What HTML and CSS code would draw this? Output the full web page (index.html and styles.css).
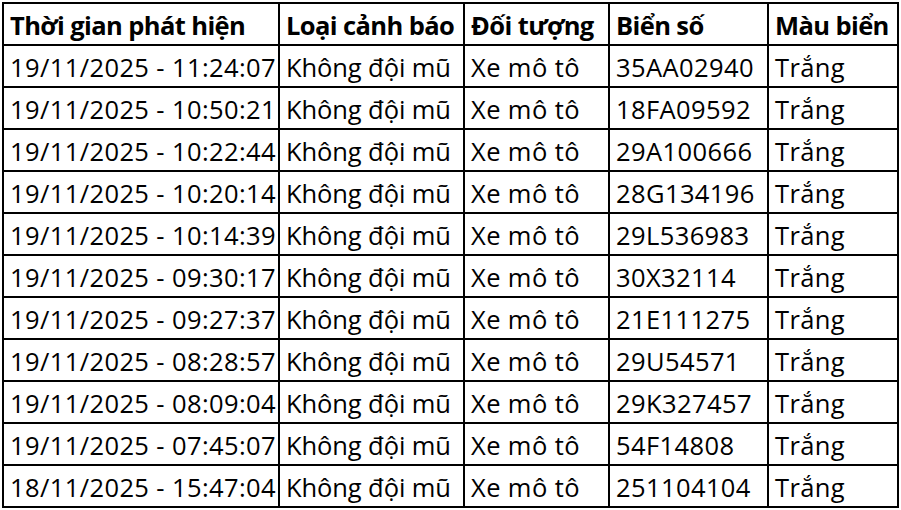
FILE: index.html
```html
<!DOCTYPE html>
<html lang="vi">
<head>
<meta charset="utf-8">
<link rel="stylesheet" href="styles.css">
</head>
<body>
<div class="sheet">
  <div class="cell head">Thời gian phát hiện</div>
  <div class="cell head">Loại cảnh báo</div>
  <div class="cell head">Đối tượng</div>
  <div class="cell head">Biển số</div>
  <div class="cell head">Màu biển</div>

  <div class="cell">19/11/2025 - 11:24:07</div><div class="cell">Không đội mũ</div><div class="cell">Xe mô tô</div><div class="cell">35AA02940</div><div class="cell">Trắng</div>
  <div class="cell">19/11/2025 - 10:50:21</div><div class="cell">Không đội mũ</div><div class="cell">Xe mô tô</div><div class="cell">18FA09592</div><div class="cell">Trắng</div>
  <div class="cell">19/11/2025 - 10:22:44</div><div class="cell">Không đội mũ</div><div class="cell">Xe mô tô</div><div class="cell">29A100666</div><div class="cell">Trắng</div>
  <div class="cell">19/11/2025 - 10:20:14</div><div class="cell">Không đội mũ</div><div class="cell">Xe mô tô</div><div class="cell">28G134196</div><div class="cell">Trắng</div>
  <div class="cell">19/11/2025 - 10:14:39</div><div class="cell">Không đội mũ</div><div class="cell">Xe mô tô</div><div class="cell">29L536983</div><div class="cell">Trắng</div>
  <div class="cell">19/11/2025 - 09:30:17</div><div class="cell">Không đội mũ</div><div class="cell">Xe mô tô</div><div class="cell">30X32114</div><div class="cell">Trắng</div>
  <div class="cell">19/11/2025 - 09:27:37</div><div class="cell">Không đội mũ</div><div class="cell">Xe mô tô</div><div class="cell">21E111275</div><div class="cell">Trắng</div>
  <div class="cell">19/11/2025 - 08:28:57</div><div class="cell">Không đội mũ</div><div class="cell">Xe mô tô</div><div class="cell">29U54571</div><div class="cell">Trắng</div>
  <div class="cell">19/11/2025 - 08:09:04</div><div class="cell">Không đội mũ</div><div class="cell">Xe mô tô</div><div class="cell">29K327457</div><div class="cell">Trắng</div>
  <div class="cell">19/11/2025 - 07:45:07</div><div class="cell">Không đội mũ</div><div class="cell">Xe mô tô</div><div class="cell">54F14808</div><div class="cell">Trắng</div>
  <div class="cell">18/11/2025 - 15:47:04</div><div class="cell">Không đội mũ</div><div class="cell">Xe mô tô</div><div class="cell">251104104</div><div class="cell">Trắng</div>
</div>
</body>
</html>
```
FILE: styles.css
```css
html, body {
  margin: 0;
  padding: 0;
  background: #ffffff;
}
body {
  padding: 2px 0 0 2px;
  font-family: "Open Sans", "Noto Sans", sans-serif;
  color: #000000;
}
.sheet {
  display: grid;
  grid-template-columns: 274px 183px 143px 157px 128px;
  grid-auto-rows: 40px;
  gap: 2px;
  padding: 2px;
  background: #000000;
  width: max-content;
}
.cell {
  background: #ffffff;
  display: flex;
  align-items: flex-end;
  padding: 0 0 4px 6px;
  font-size: 25.5px;
  line-height: 30px;
  white-space: nowrap;
  overflow: visible;
  letter-spacing: 0.4px;
}
.head {
  font-weight: 700;
  letter-spacing: -0.6px;
}
.cell:nth-child(5n+2):not(.head) {
  letter-spacing: -0.1px;
}
```
